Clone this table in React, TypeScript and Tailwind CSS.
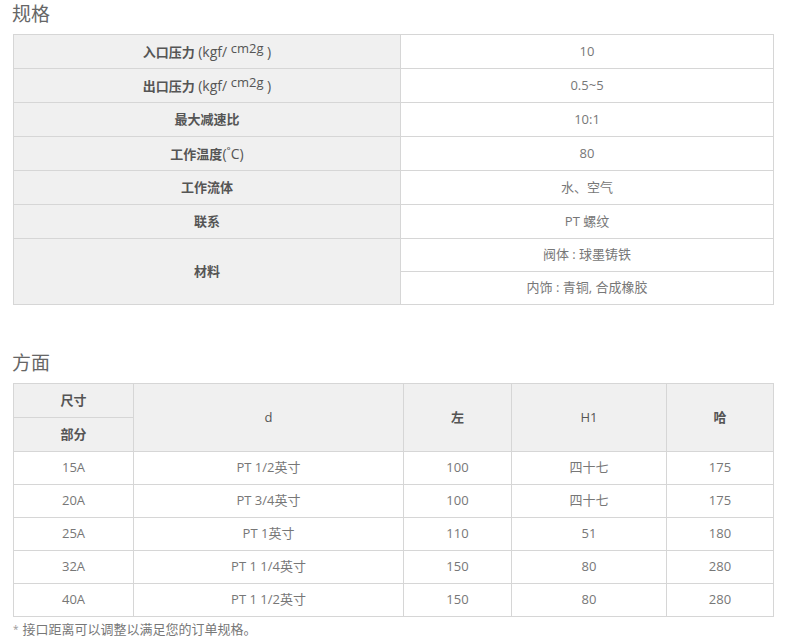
import React from 'react';

const specRows: { label: React.ReactNode; value: string }[] = [
  {
    label: (
      <>
        入口压力 <span className="font-normal text-[14px]">(kgf/ <sup className="text-[13px] -top-[4px]">cm2g</sup> )</span>
      </>
    ),
    value: '10',
  },
  {
    label: (
      <>
        出口压力 <span className="font-normal text-[14px]">(kgf/ <sup className="text-[13px] -top-[4px]">cm2g</sup> )</span>
      </>
    ),
    value: '0.5~5',
  },
  { label: '最大减速比', value: '10:1' },
  {
    label: (
      <>
        工作温度<span className="font-normal text-[14px]">(˚C)</span>
      </>
    ),
    value: '80',
  },
  { label: '工作流体', value: '水、空气' },
  { label: '联系', value: 'PT 螺纹' },
];

const dimRows = [
  ['15A', 'PT 1/2英寸', '100', '四十七', '175'],
  ['20A', 'PT 3/4英寸', '100', '四十七', '175'],
  ['25A', 'PT 1英寸', '110', '51', '180'],
  ['32A', 'PT 1 1/4英寸', '150', '80', '280'],
  ['40A', 'PT 1 1/2英寸', '150', '80', '280'],
];

const th = 'border border-[#d6d6d6] bg-[#f0f0f0] text-[#555] font-bold text-center align-middle p-0';
const td = 'border border-[#d6d6d6] bg-white text-[#777] text-center align-middle p-0';

const App: React.FC = () => {
  return (
    <div
      className="w-[800px] h-[644px] bg-white pl-[13px] text-[13px]"
      style={{ fontFamily: '"Open Sans", "Noto Sans CJK SC", sans-serif' }}
    >
      {/* 规格 */}
      <div className="h-[28px] flex items-center text-[19px] text-[#666] -ml-px">规格</div>
      <table className="mt-[6px] w-[761px] border-collapse table-fixed">
        <colgroup>
          <col className="w-[387px]" />
          <col />
        </colgroup>
        <tbody>
          {specRows.map((row, i) => (
            <tr key={i} className="h-[34px]">
              <th className={th}>{row.label}</th>
              <td className={td}>{row.value}</td>
            </tr>
          ))}
          <tr className="h-[33px]">
            <th rowSpan={2} className={th}>
              材料
            </th>
            <td className={td}>阀体 : 球墨铸铁</td>
          </tr>
          <tr className="h-[33px]">
            <td className={td}>内饰 : 青铜, 合成橡胶</td>
          </tr>
        </tbody>
      </table>

      {/* 方面 */}
      <div className="mt-[44px] h-[28px] flex items-center text-[19px] text-[#666] -ml-px">方面</div>
      <table className="mt-[6px] w-[761px] border-collapse table-fixed">
        <colgroup>
          <col className="w-[120px]" />
          <col className="w-[270px]" />
          <col className="w-[108px]" />
          <col className="w-[155px]" />
          <col />
        </colgroup>
        <thead>
          <tr className="h-[34px]">
            <th className={th}>尺寸</th>
            <th rowSpan={2} className={`${th} font-normal`}>
              d
            </th>
            <th rowSpan={2} className={th}>
              左
            </th>
            <th rowSpan={2} className={`${th} font-normal`}>
              H1
            </th>
            <th rowSpan={2} className={th}>
              哈
            </th>
          </tr>
          <tr className="h-[34px]">
            <th className={th}>部分</th>
          </tr>
        </thead>
        <tbody>
          {dimRows.map((row) => (
            <tr key={row[0]} className="h-[33px]">
              {row.map((cell, j) => (
                <td key={j} className={td}>
                  {cell}
                </td>
              ))}
            </tr>
          ))}
        </tbody>
      </table>
      <div className="mt-[3px] text-[#777] text-[13px] leading-[18px]">
        <span className="text-[10px] align-top mr-[4px] text-[#999]">*</span>接口距离可以调整以满足您的订单规格。
      </div>
    </div>
  );
};

export default App;
